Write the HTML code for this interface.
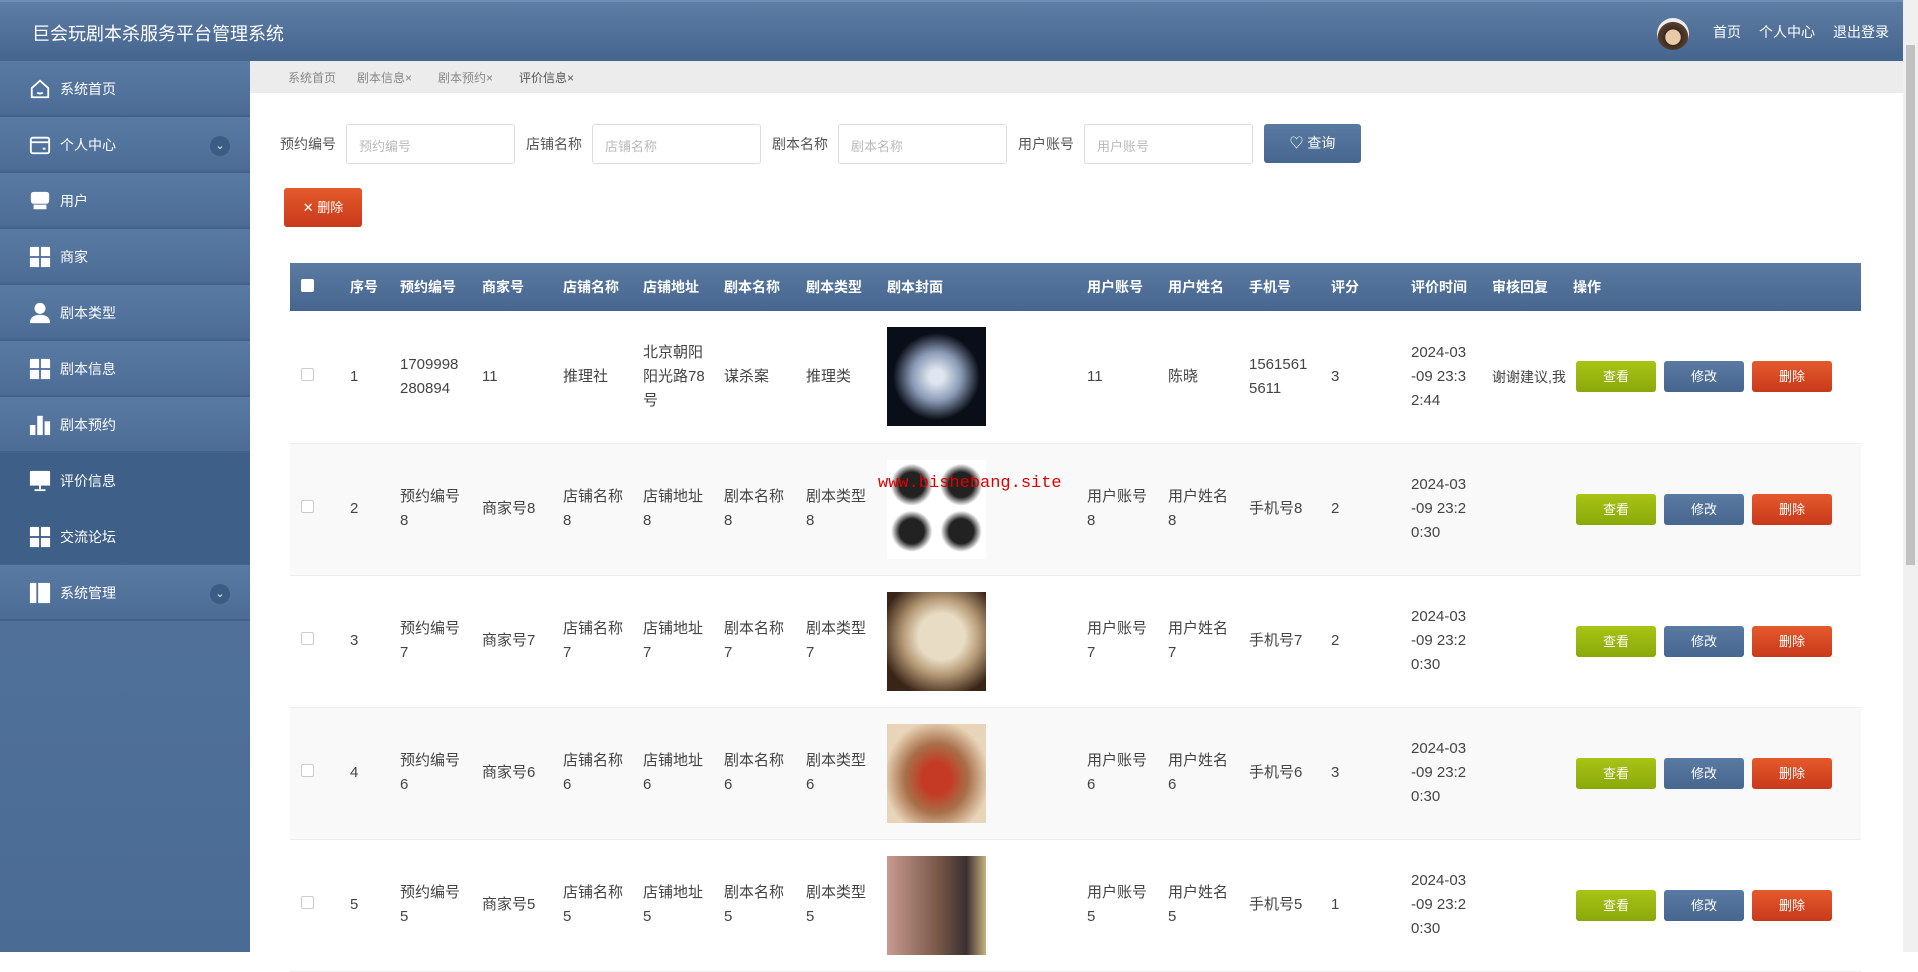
<!DOCTYPE html>
<html><head><meta charset="utf-8">
<style>
*{margin:0;padding:0;box-sizing:border-box}
body{width:1918px;height:952px;overflow:hidden;background:#fff;font-family:"Liberation Sans","Noto Sans CJK SC",sans-serif;color:#333;position:relative}
.hdr{position:absolute;left:0;top:0;width:1903px;height:61px;background:linear-gradient(#5d7da5,#45658e);border-top:2px solid #6d8fb8}
.hdr .t{position:absolute;left:32px;top:18px;color:#fff;font-size:18px}
.hdr .r{position:absolute;right:14px;top:20px;color:#fff;font-size:14px}
.hdr .r span{margin-left:18px}
.av{position:absolute;left:1657px;top:16px;width:32px;height:32px;border-radius:50%;background:radial-gradient(circle at 50% 60%,#e8c9a8 30%,#3b2a20 32%,#5a4030 60%,#eee 62%)}
.side{position:absolute;left:0;top:61px;width:250px;height:891px;background:linear-gradient(#5a7aa2,#4a6b94)}
.it{height:56px;background:linear-gradient(#587aa3,#4c6c95);border-bottom:2px solid #43628a;position:relative;color:#fff;font-size:14px}
.it.dk{background:#3e6088;border-bottom:none}
.it span{position:absolute;left:60px;top:18px}
.ic{position:absolute;left:28px;top:17px;width:24px;height:22px}
.chev{position:absolute;left:210px;top:19px;width:20px;height:20px;border-radius:50%;background:#3d5c84;color:#cfe;font-size:11px;text-align:center;line-height:20px}
.tabs{position:absolute;left:250px;top:61px;width:1653px;height:32px;background:#ececec;font-size:12px;color:#888}
.tabs span{position:absolute;top:8px}
.lbl{position:absolute;top:134px;font-size:14px;color:#555}
.inp{position:absolute;top:124px;width:169px;height:40px;border:1px solid #ddd;border-radius:3px;font-size:13px;color:#bbb;padding:11px 12px}
.qbtn{position:absolute;left:1264px;top:124px;width:97px;height:39px;border-radius:3px;background:linear-gradient(#5a7aa2,#46668f);color:#fff;font-size:14px;text-align:center;line-height:39px}
.dbtn{position:absolute;left:284px;top:188px;width:78px;height:39px;border-radius:3px;background:linear-gradient(#e45a2c,#c8391a);color:#fff;font-size:13px;text-align:center;line-height:39px}
table{position:absolute;left:290px;top:263px;border-collapse:collapse;table-layout:fixed;width:1571px;font-size:15px}
th{height:48px;background:linear-gradient(#5a7aa2,#46668f);color:#fff;text-align:left;font-weight:bold;font-size:14px;padding:0}
td{height:132px;padding:0 18px 0 0;vertical-align:middle;line-height:24px;word-break:break-all;color:#444;border-bottom:1px solid #eee}
td.dt{padding-right:24px}
td.rp{padding-right:11px;white-space:nowrap;overflow:hidden;font-size:14px}
tr.g td{background:#f9f9fa}
.cb{display:inline-block;width:13px;height:13px;border:1px solid #ccc;border-radius:2px;background:#fff;margin-left:11px}
th .cb{border:none}
td.op{padding-left:3px}
.b{display:inline-block;width:80px;height:31px;border-radius:3px;color:#fff;text-align:center;line-height:31px;font-size:13px;margin-right:8px}
.v{background:linear-gradient(#a8c416,#8aa80a)}.m{background:linear-gradient(#5a7aa2,#46668f)}.x{background:linear-gradient(#e45a2c,#c8391a)}
.img{width:99px;height:99px}
.sb{position:absolute;left:1903px;top:0;width:15px;height:952px;background:#f0f0f0}
.sb div{position:absolute;left:3px;top:45px;width:9px;height:520px;background:#c1c1c1}
.wm{position:absolute;left:878px;top:474px;color:#d00;font-family:"Liberation Mono",monospace;font-size:17px}
</style></head><body>
<div class="hdr"><div class="t">巨会玩剧本杀服务平台管理系统</div><div class="av"></div><div class="r"><span>首页</span><span>个人中心</span><span>退出登录</span></div></div>
<div class="side">
<div class="it"><svg class="ic" viewBox="0 0 24 24" fill="none" stroke="#fff" stroke-width="2"><path d="M3 11L12 3l9 8v10H3z"/><path d="M9 16q3 2 6 0"/></svg><span>系统首页</span></div>
<div class="it"><svg class="ic" viewBox="0 0 24 24" fill="none" stroke="#fff" stroke-width="2"><rect x="2" y="4" width="20" height="17" rx="2"/><path d="M2 9h20M15 16h3"/></svg><span>个人中心</span><div class="chev">⌄</div></div>
<div class="it"><svg class="ic" viewBox="0 0 24 24" fill="#fff"><rect x="2" y="2" width="20" height="13" rx="3"/><rect x="5" y="16" width="14" height="5"/></svg><span>用户</span></div>
<div class="it"><svg class="ic" viewBox="0 0 24 24" fill="#fff"><rect x="1" y="1" width="10" height="10"/><rect x="13" y="1" width="10" height="10"/><rect x="1" y="13" width="10" height="10"/><rect x="13" y="13" width="10" height="10"/></svg><span>商家</span></div>
<div class="it"><svg class="ic" viewBox="0 0 24 24" fill="#fff"><circle cx="12" cy="7" r="6"/><path d="M1 23q0-9 11-9t11 9z"/></svg><span>剧本类型</span></div>
<div class="it"><svg class="ic" viewBox="0 0 24 24" fill="#fff"><rect x="1" y="1" width="10" height="10"/><rect x="13" y="1" width="10" height="10"/><rect x="1" y="13" width="10" height="10"/><rect x="13" y="13" width="10" height="10"/></svg><span>剧本信息</span></div>
<div class="it"><svg class="ic" viewBox="0 0 24 24" fill="#fff"><rect x="1" y="12" width="6" height="11"/><rect x="9" y="2" width="6" height="21"/><rect x="17" y="8" width="6" height="15"/></svg><span>剧本预约</span></div>
<div class="it dk"><svg class="ic" viewBox="0 0 24 24" fill="#fff"><rect x="1" y="1" width="22" height="16"/><rect x="11" y="17" width="2" height="4"/><rect x="6" y="21" width="12" height="2"/></svg><span>评价信息</span></div>
<div class="it dk" style="border-bottom:2px solid #43628a"><svg class="ic" viewBox="0 0 24 24" fill="#fff"><rect x="1" y="1" width="10" height="10"/><rect x="13" y="1" width="10" height="10"/><rect x="1" y="13" width="10" height="10"/><rect x="13" y="13" width="10" height="10"/></svg><span>交流论坛</span></div>
<div class="it"><svg class="ic" viewBox="0 0 24 24" fill="#fff"><rect x="1" y="1" width="7" height="22"/><rect x="10" y="1" width="13" height="22"/></svg><span>系统管理</span><div class="chev">⌄</div></div>
</div>
<div class="tabs"><span style="left:38px">系统首页</span><span style="left:107px">剧本信息×</span><span style="left:188px">剧本预约×</span><span style="left:269px;color:#555">评价信息×</span></div>
<div class="lbl" style="left:280px">预约编号</div><div class="inp" style="left:346px">预约编号</div>
<div class="lbl" style="left:526px">店铺名称</div><div class="inp" style="left:592px">店铺名称</div>
<div class="lbl" style="left:772px">剧本名称</div><div class="inp" style="left:838px">剧本名称</div>
<div class="lbl" style="left:1018px">用户账号</div><div class="inp" style="left:1084px">用户账号</div>
<div class="qbtn">♡ 查询</div>
<div class="dbtn">✕ 删除</div>
<table>
<colgroup><col style="width:60px"><col style="width:50px"><col style="width:82px"><col style="width:81px"><col style="width:80px"><col style="width:81px"><col style="width:82px"><col style="width:81px"><col style="width:200px"><col style="width:81px"><col style="width:81px"><col style="width:82px"><col style="width:80px"><col style="width:81px"><col style="width:81px"><col style="width:288px"></colgroup>
<tr><th><span class="cb" style="margin-left:11px"></span></th><th>序号</th><th>预约编号</th><th>商家号</th><th>店铺名称</th><th>店铺地址</th><th>剧本名称</th><th>剧本类型</th><th>剧本封面</th><th>用户账号</th><th>用户姓名</th><th>手机号</th><th>评分</th><th>评价时间</th><th>审核回复</th><th>操作</th></tr>
<tr><td><span class="cb"></span></td><td>1</td><td>1709998280894</td><td>11</td><td>推理社</td><td>北京朝阳阳光路78号</td><td>谋杀案</td><td>推理类</td><td><div class="img" style="background:radial-gradient(ellipse at 50% 50%,#dfe6f0 10%,#8a9ab5 35%,#0a0e18 62%)"></div></td><td>11</td><td>陈晓</td><td>15615615611</td><td>3</td><td class="dt">2024-03-09 23:32:44</td><td class="rp">谢谢建议,我</td><td class="op"><span class="b v">查看</span><span class="b m">修改</span><span class="b x">删除</span></td></tr>
<tr class="g"><td><span class="cb"></span></td><td>2</td><td>预约编号8</td><td>商家号8</td><td>店铺名称8</td><td>店铺地址8</td><td>剧本名称8</td><td>剧本类型8</td><td><div class="img" style="background:radial-gradient(circle at 25% 25%,#222 12%,transparent 20%),radial-gradient(circle at 75% 25%,#222 12%,transparent 20%),radial-gradient(circle at 25% 72%,#222 12%,transparent 20%),radial-gradient(circle at 75% 72%,#222 12%,transparent 20%),#fff"></div></td><td>用户账号8</td><td>用户姓名8</td><td>手机号8</td><td>2</td><td class="dt">2024-03-09 23:20:30</td><td class="rp"></td><td class="op"><span class="b v">查看</span><span class="b m">修改</span><span class="b x">删除</span></td></tr>
<tr><td><span class="cb"></span></td><td>3</td><td>预约编号7</td><td>商家号7</td><td>店铺名称7</td><td>店铺地址7</td><td>剧本名称7</td><td>剧本类型7</td><td><div class="img" style="background:radial-gradient(ellipse at 55% 45%,#e8dcc4 30%,#b69a76 50%,#3a2418 80%)"></div></td><td>用户账号7</td><td>用户姓名7</td><td>手机号7</td><td>2</td><td class="dt">2024-03-09 23:20:30</td><td class="rp"></td><td class="op"><span class="b v">查看</span><span class="b m">修改</span><span class="b x">删除</span></td></tr>
<tr class="g"><td><span class="cb"></span></td><td>4</td><td>预约编号6</td><td>商家号6</td><td>店铺名称6</td><td>店铺地址6</td><td>剧本名称6</td><td>剧本类型6</td><td><div class="img" style="background:radial-gradient(ellipse at 50% 55%,#c43a24 20%,#a8704a 45%,#e8d4b8 75%)"></div></td><td>用户账号6</td><td>用户姓名6</td><td>手机号6</td><td>3</td><td class="dt">2024-03-09 23:20:30</td><td class="rp"></td><td class="op"><span class="b v">查看</span><span class="b m">修改</span><span class="b x">删除</span></td></tr>
<tr><td><span class="cb"></span></td><td>5</td><td>预约编号5</td><td>商家号5</td><td>店铺名称5</td><td>店铺地址5</td><td>剧本名称5</td><td>剧本类型5</td><td><div class="img" style="background:linear-gradient(90deg,#c89a90,#7a5a4a 50%,#3a3030 80%,#c8b080)"></div></td><td>用户账号5</td><td>用户姓名5</td><td>手机号5</td><td>1</td><td class="dt">2024-03-09 23:20:30</td><td class="rp"></td><td class="op"><span class="b v">查看</span><span class="b m">修改</span><span class="b x">删除</span></td></tr>
</table>
<div class="wm">www.bishebang.site</div>
<div class="sb"><div></div></div>
</body></html>
